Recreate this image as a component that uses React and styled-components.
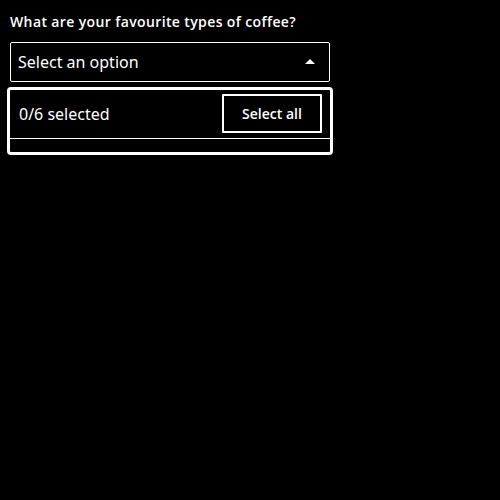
import React from "react";
import styled, { createGlobalStyle } from "styled-components";

const GlobalStyle = createGlobalStyle`
  html, body {
    margin: 0;
    padding: 0;
    background: #000;
  }
  body {
    font-family: "Noto Sans", "Open Sans", sans-serif;
    color: #fff;
  }
`;

const Field = styled.div`
  padding: 11px 10px 10px;
  width: 320px;
`;

const Label = styled.label`
  display: block;
  font-family: "Open Sans", "Noto Sans", sans-serif;
  font-size: 14px;
  font-weight: 600;
  line-height: 22px;
  letter-spacing: 0.38px;
  margin-bottom: 9px;
`;

const SelectBox = styled.div`
  box-sizing: border-box;
  height: 40px;
  border: 1px solid #fff;
  border-radius: 2px;
  display: flex;
  align-items: center;
  justify-content: space-between;
  padding: 0 14px 0 7px;
  font-size: 16px;
`;

const Caret = styled.span`
  width: 0;
  height: 0;
  border-left: 5px solid transparent;
  border-right: 5px solid transparent;
  border-bottom: 5px solid #fff;
  margin-top: -2px;
`;

const Panel = styled.div`
  margin: 5px -3px 0;
  border: 3px solid #fff;
  border-radius: 4px;
  background: #000;
`;

const PanelHead = styled.div`
  display: flex;
  align-items: flex-start;
  justify-content: space-between;
  height: 49px;
  box-sizing: border-box;
  padding: 4px 8px 0 9px;
  border-bottom: 1px solid #fff;
`;

const Count = styled.span`
  font-size: 16px;
  line-height: 40px;
`;

const SelectAll = styled.button`
  box-sizing: border-box;
  width: 100px;
  height: 39px;
  background: #000;
  color: #fff;
  border: 2px solid #fff;
  border-radius: 1px;
  font-family: "Open Sans", "Noto Sans", sans-serif;
  font-size: 14px;
  font-weight: 600;
`;

const PanelList = styled.div`
  height: 13px;
`;

export default function App() {
  return (
    <>
      <GlobalStyle />
      <Field>
        <Label>What are your favourite types of coffee?</Label>
        <SelectBox>
          <span>Select an option</span>
          <Caret />
        </SelectBox>
        <Panel>
          <PanelHead>
            <Count>0/6 selected</Count>
            <SelectAll>Select all</SelectAll>
          </PanelHead>
          <PanelList />
        </Panel>
      </Field>
    </>
  );
}
